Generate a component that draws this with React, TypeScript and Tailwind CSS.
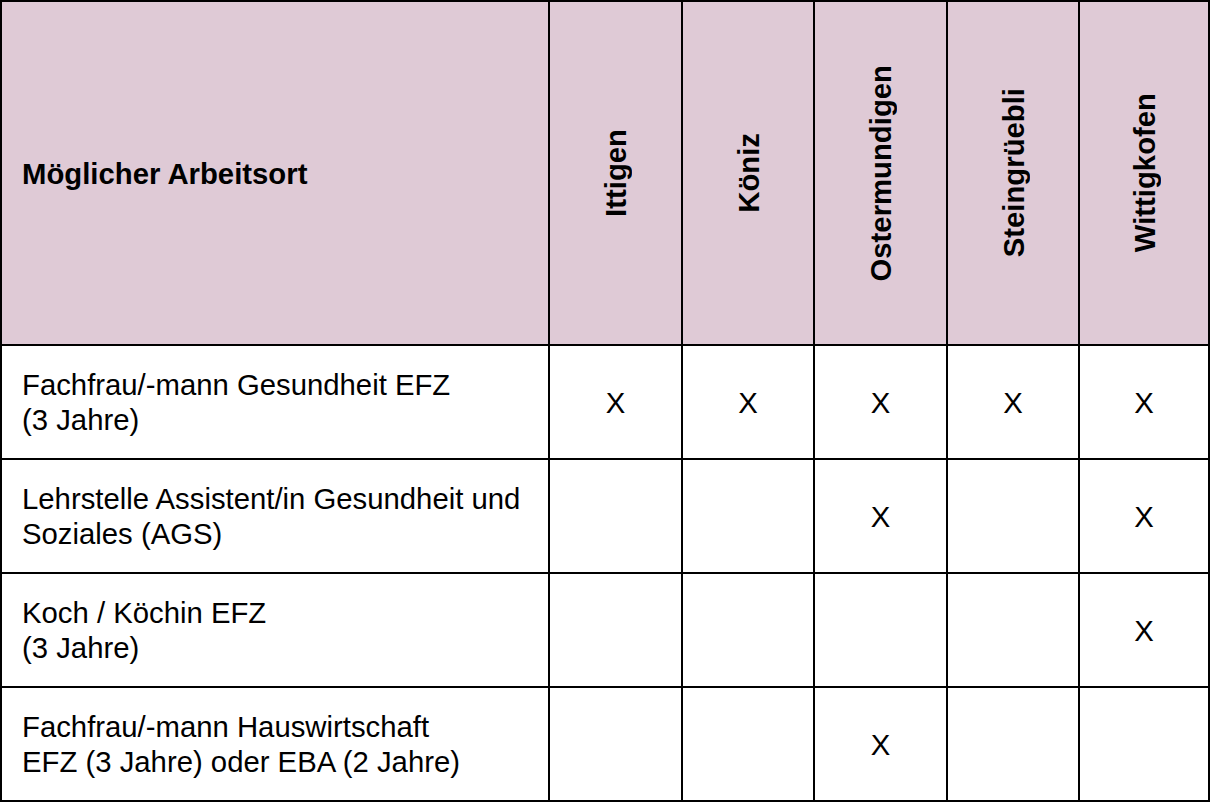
const locations = ['Ittigen', 'Köniz', 'Ostermundigen', 'Steingrüebli', 'Wittigkofen'];

const rows: { label: string[]; marks: boolean[] }[] = [
  { label: ['Fachfrau/-mann Gesundheit EFZ', '(3 Jahre)'], marks: [true, true, true, true, true] },
  { label: ['Lehrstelle Assistent/in Gesundheit und', 'Soziales (AGS)'], marks: [false, false, true, false, true] },
  { label: ['Koch / Köchin EFZ', '(3 Jahre)'], marks: [false, false, false, false, true] },
  { label: ['Fachfrau/-mann Hauswirtschaft', 'EFZ (3 Jahre) oder EBA (2 Jahre)'], marks: [false, false, true, false, false] },
];

/** Tabelle: Lehrstellen je möglichem Arbeitsort. */
export default function App() {
  return (
    <div className="h-[802px] w-[1210px] bg-white font-['Liberation_Sans',Arial,sans-serif] text-[29.3px] leading-[35px] text-black">
      <div className="grid h-full w-full grid-cols-[548px_133px_132px_133px_132px_130px] grid-rows-[344px_114px_114px_114px_114px] border-l-2 border-t-2 border-black">
        <div className="flex items-center border-b-2 border-r-2 border-black bg-[#dfcad6] pl-5 font-bold">
          Möglicher Arbeitsort
        </div>
        {locations.map((loc) => (
          <div
            key={loc}
            className="flex items-center justify-center border-b-2 border-r-2 border-black bg-[#dfcad6]"
          >
            <span className="rotate-180 font-bold [writing-mode:vertical-rl]">{loc}</span>
          </div>
        ))}

        {rows.map((row, i) => (
          <Row key={i} label={row.label} marks={row.marks} />
        ))}
      </div>
    </div>
  );
}

function Row({ label, marks }: { label: string[]; marks: boolean[] }) {
  return (
    <>
      <div className="flex flex-col justify-center border-b-2 border-r-2 border-black pl-5">
        {label.map((line) => (
          <div key={line}>{line}</div>
        ))}
      </div>
      {marks.map((m, j) => (
        <div key={j} className="flex items-center justify-center border-b-2 border-r-2 border-black">
          {m && <span>X</span>}
        </div>
      ))}
    </>
  );
}
